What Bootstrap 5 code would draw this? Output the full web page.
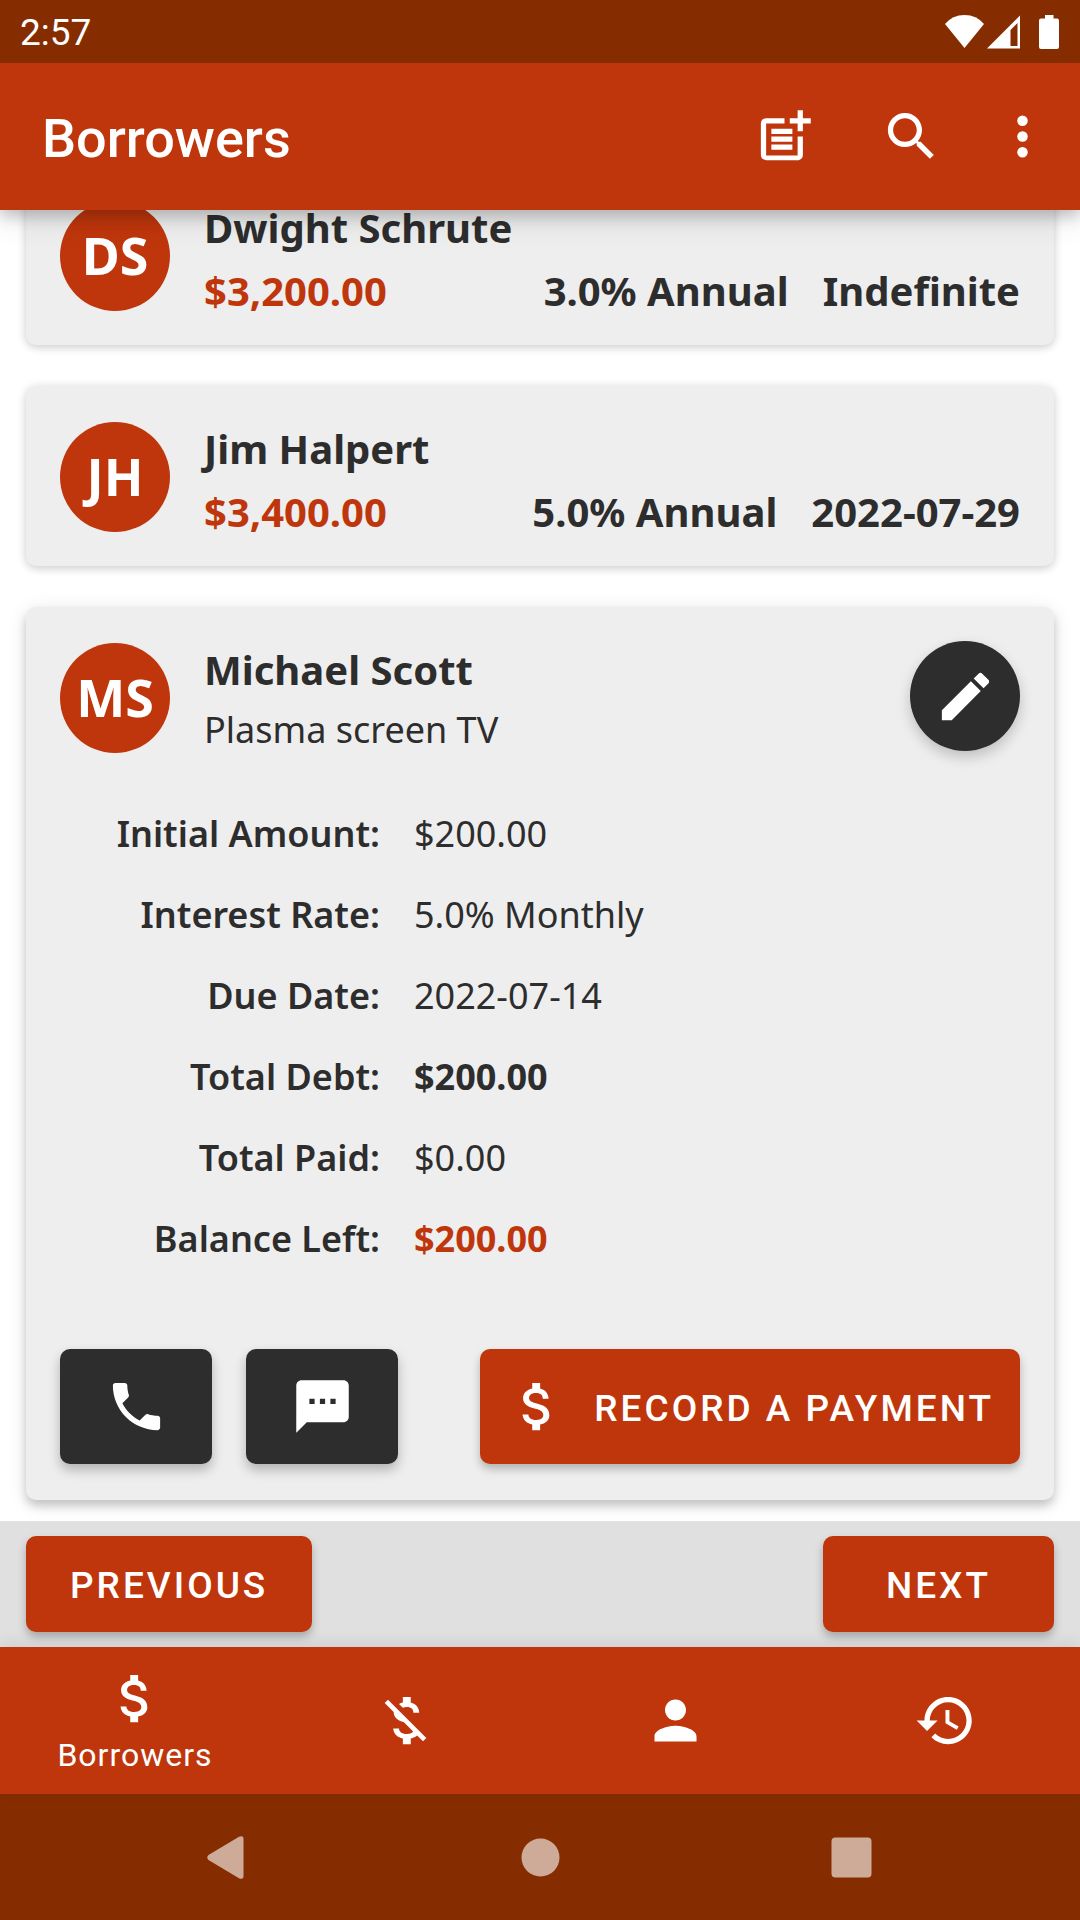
<!DOCTYPE html>
<html lang="en">
<head>
<meta charset="utf-8">
<meta name="viewport" content="width=device-width, initial-scale=1">
<title>Borrowers</title>
<link href="https://cdn.jsdelivr.net/npm/bootstrap@5.3.0/dist/css/bootstrap.min.css" rel="stylesheet">
<style>
  :root { --brand: #bf360c; --brand-dark: #852d00; --ink: #2d2d2d; --surface: #eeeeee; }
  body { font-family: "Noto Sans", sans-serif; font-size: 36px; line-height: 51px; color: var(--ink); background: #fff; }
  .roboto { font-family: Roboto, sans-serif; }
  .brand-bg { background: var(--brand); }
  .brand-text { color: var(--brand); }
  .system-bg { background: var(--brand-dark); }
  .ico { width: 63px; height: 63px; fill: currentColor; display: block; flex: none; }

  .status-bar { height: 63px; padding: 2px 20px 0; font-size: 37px; z-index: 3; }
  .app-bar { height: 147px; padding: 0 26px 0 42px; z-index: 2; box-shadow: 0 6px 14px rgba(0,0,0,.2), 0 10px 30px rgba(0,0,0,.1); }
  .app-title { font-size: 54px; line-height: 62px; font-weight: 500; padding-top: 4px; }
  .app-actions { gap: 64px; }
  .app-actions button:last-child { margin-left: -16px; }
  .plain-btn { background: none; border: 0; padding: 0; color: inherit; }

  .borrower-list { overflow-y: auto; scrollbar-width: none; min-height: 0; padding: 21px 26px; }
  .borrower-list::-webkit-scrollbar { display: none; }
  .list-stack { gap: 41px; }
  .borrower { background: var(--surface); border: 0; border-radius: 10px; color: var(--ink); padding: 34px 34px 26px; box-shadow: 0 3px 8px rgba(0,0,0,.14), 0 0 12px rgba(0,0,0,.08); }
  .borrower-open { padding-bottom: 36px; box-shadow: 0 6px 10px rgba(0,0,0,.18), 0 3px 20px rgba(0,0,0,.1); }
  .head-row { gap: 34px; }
  .text-stack { gap: 6px; }
  .strong-line { font-size: 40px; line-height: 57px; font-weight: 700; margin: 0; }
  .terms { gap: 34px; }
  .avatar { width: 110px; height: 110px; margin-top: 2px; padding-bottom: 4px; font-size: 52px; font-weight: 700; color: #fff; }
  .edit-btn { width: 110px; height: 110px; background: var(--ink); color: #fff; border: 0; box-shadow: 0 6px 14px rgba(0,0,0,.2); }
  .detail-list { margin: 53px 0 0; --bs-gutter-x: 0; row-gap: 30px; }
  .detail-list dt { font-weight: 600; }
  .detail-list dd { margin: 0; padding-left: 34px; }
  .action-row { margin-top: 85px; gap: 34px; }

  .btn-md { font-family: Roboto, sans-serif; font-size: 37px; line-height: 44px; font-weight: 500; letter-spacing: 3px; text-transform: uppercase; color: #fff; border: 0; border-radius: 10px; box-shadow: 0 5px 8px rgba(0,0,0,.25); }
  .btn-md:hover { background: var(--brand); color: #fff; }
  .btn-md span { padding-top: 4px; }
  .btn-tall { height: 115px; padding: 0 26px; gap: 25px; }
  .btn-dark-tile { width: 152px; background: var(--ink); box-shadow: 0 6px 12px rgba(0,0,0,.25); }
  .btn-page { height: 96px; min-width: 231px; padding: 0 44px; }
  .pager { background: #e0e0e0; height: 126px; padding: 0 26px; }

  .bottom-nav { height: 147px; z-index: 2; box-shadow: 0 -4px 14px rgba(0,0,0,.08); }
  .bottom-nav a { color: #fff; text-decoration: none; font-size: 32px; line-height: 38px; letter-spacing: 1px; gap: 6px; }
  .system-nav { height: 126px; color: #ceab99; gap: 249px; }
</style>
</head>
<body>
<div class="d-flex flex-column vh-100">

  <div class="status-bar system-bg roboto text-white d-flex align-items-center justify-content-between flex-shrink-0 position-relative">
    <span>2:57</span>
    <svg width="115" height="36" viewBox="0 0 115 36" fill="#fff" aria-hidden="true">
      <path d="M0 9Q7.500 0 19.500 0T39 9L19.500 33Z"/>
      <path fill-rule="evenodd" d="M42 33.500L75 .500V33.500ZM65.500 15V31H72.500V8Z"/>
      <path d="M100 0h8.500V3.500h3.500q2 0 2 2v26.500q0 2-2 2H96q-2 0-2-2V5.500q0-2 2-2h4Z"/>
    </svg>
  </div>

  <header class="app-bar brand-bg roboto text-white d-flex align-items-center justify-content-between flex-shrink-0 position-relative">
    <h1 class="app-title m-0">Borrowers</h1>
    <div class="app-actions d-flex">
      <button type="button" class="plain-btn" aria-label="Add loan"><svg class="ico" viewBox="0 0 24 24"><path d="M17 19.220H5V7h7V5H5c-1.100 0-2 .900-2 2v12c0 1.100.900 2 2 2h12c1.100 0 2-.900 2-2v-7h-2v7.220z"/><path d="M19 2h-2v3h-3v2h3v3h2V7h3V5h-3V2zM7 9h8v2H7zM7 12h8v2H7zM7 15h8v2H7z"/></svg></button>
      <button type="button" class="plain-btn" aria-label="Search"><svg class="ico" viewBox="0 0 24 24"><path d="M15.500 14h-.79l-.28-.27C15.410 12.590 16 11.110 16 9.500 16 5.910 13.090 3 9.500 3S3 5.910 3 9.500 5.910 16 9.500 16c1.610 0 3.090-.59 4.230-1.570l.27.28v.79l5 4.990L20.490 19l-4.990-5zm-6 0C7.010 14 5 11.990 5 9.500S7.010 5 9.500 5 14 7.010 14 9.500 11.990 14 9.500 14z"/></svg></button>
      <button type="button" class="plain-btn" aria-label="More options"><svg class="ico" viewBox="0 0 24 24"><circle cx="12" cy="6" r="2"/><circle cx="12" cy="12" r="2"/><circle cx="12" cy="18" r="2"/></svg></button>
    </div>
  </header>

  <main class="borrower-list flex-fill" id="borrowers">
    <div class="list-stack d-flex flex-column">

      <article class="card borrower">
        <div class="head-row d-flex align-items-start">
          <div class="avatar brand-bg rounded-circle d-flex align-items-center justify-content-center flex-shrink-0">DS</div>
          <div class="text-stack d-flex flex-column flex-fill">
            <h2 class="strong-line">Dwight Schrute</h2>
            <div class="strong-line terms d-flex"><span class="brand-text me-auto">$3,200.00</span><span>3.0% Annual</span><span>Indefinite</span></div>
          </div>
        </div>
      </article>

      <article class="card borrower">
        <div class="head-row d-flex align-items-start">
          <div class="avatar brand-bg rounded-circle d-flex align-items-center justify-content-center flex-shrink-0">JH</div>
          <div class="text-stack d-flex flex-column flex-fill">
            <h2 class="strong-line">Jim Halpert</h2>
            <div class="strong-line terms d-flex"><span class="brand-text me-auto">$3,400.00</span><span>5.0% Annual</span><span>2022-07-29</span></div>
          </div>
        </div>
      </article>

      <article class="card borrower borrower-open">
        <div class="head-row d-flex align-items-start">
          <div class="avatar brand-bg rounded-circle d-flex align-items-center justify-content-center flex-shrink-0">MS</div>
          <div class="text-stack d-flex flex-column flex-fill">
            <h2 class="strong-line">Michael Scott</h2>
            <div>Plasma screen TV</div>
          </div>
          <button type="button" class="edit-btn rounded-circle d-flex align-items-center justify-content-center p-0" aria-label="Edit"><svg class="ico" viewBox="0 0 24 24"><path d="M3 17.250V21h3.750L17.810 9.940l-3.750-3.750L3 17.250zM20.710 7.040c.39-.39.39-1.020 0-1.410l-2.340-2.340c-.39-.39-1.020-.39-1.410 0l-1.830 1.830 3.750 3.750 1.830-1.830z"/></svg></button>
        </div>

        <dl class="detail-list row">
          <dt class="col-4 text-end">Initial Amount:</dt><dd class="col-8">$200.00</dd>
          <dt class="col-4 text-end">Interest Rate:</dt><dd class="col-8">5.0% Monthly</dd>
          <dt class="col-4 text-end">Due Date:</dt><dd class="col-8">2022-07-14</dd>
          <dt class="col-4 text-end">Total Debt:</dt><dd class="col-8 fw-bold">$200.00</dd>
          <dt class="col-4 text-end">Total Paid:</dt><dd class="col-8">$0.00</dd>
          <dt class="col-4 text-end">Balance Left:</dt><dd class="col-8 fw-bold brand-text">$200.00</dd>
        </dl>

        <div class="action-row d-flex">
          <button type="button" class="btn btn-md btn-tall btn-dark-tile d-flex align-items-center justify-content-center" aria-label="Call"><svg class="ico" viewBox="0 0 24 24"><path d="M6.620 10.790c1.440 2.830 3.760 5.140 6.590 6.590l2.200-2.200c.27-.27.67-.36 1.020-.24 1.120.37 2.330.57 3.570.57.55 0 1 .45 1 1V20c0 .55-.45 1-1 1-9.390 0-17-7.610-17-17 0-.55.45-1 1-1h3.500c.55 0 1 .45 1 1 0 1.250.2 2.450.57 3.570.11.35.03.74-.25 1.020l-2.200 2.200z"/></svg></button>
          <button type="button" class="btn btn-md btn-tall btn-dark-tile d-flex align-items-center justify-content-center" aria-label="Message"><svg class="ico" viewBox="0 0 24 24"><path d="M20 2H4c-1.100 0-1.990.9-1.990 2L2 22l4-4h14c1.100 0 2-.9 2-2V4c0-1.100-.9-2-2-2zM9 11H7V9h2v2zm4 0h-2V9h2v2zm4 0h-2V9h2v2z"/></svg></button>
          <button type="button" class="btn btn-md btn-tall brand-bg ms-auto d-flex align-items-center text-nowrap"><svg class="ico" viewBox="0 0 24 24"><path d="M11.800 10.900c-2.270-.59-3-1.200-3-2.150 0-1.090 1.010-1.850 2.700-1.850 1.780 0 2.440.85 2.500 2.100h2.210c-.07-1.720-1.120-3.300-3.210-3.810V3h-3v2.160c-1.940.42-3.500 1.680-3.500 3.610 0 2.310 1.910 3.460 4.700 4.130 2.500.6 3 1.480 3 2.410 0 .69-.49 1.790-2.700 1.790-2.060 0-2.870-.92-2.980-2.100h-2.200c.12 2.190 1.760 3.420 3.680 3.830V21h3v-2.150c1.950-.37 3.500-1.500 3.500-3.550 0-2.840-2.430-3.810-4.700-4.400z"/></svg><span>Record a payment</span></button>
        </div>
      </article>

    </div>
  </main>

  <div class="pager d-flex align-items-center justify-content-between flex-shrink-0">
    <button type="button" class="btn btn-md btn-page brand-bg d-flex align-items-center justify-content-center"><span>Previous</span></button>
    <button type="button" class="btn btn-md btn-page brand-bg d-flex align-items-center justify-content-center"><span>Next</span></button>
  </div>

  <nav class="bottom-nav brand-bg roboto d-flex flex-shrink-0 position-relative" aria-label="Sections">
    <a href="#" class="col d-flex flex-column align-items-center justify-content-center" aria-current="page"><svg class="ico" viewBox="0 0 24 24"><path d="M11.800 10.900c-2.270-.59-3-1.200-3-2.150 0-1.090 1.010-1.850 2.700-1.850 1.780 0 2.440.85 2.500 2.100h2.210c-.07-1.720-1.120-3.300-3.210-3.810V3h-3v2.160c-1.940.42-3.500 1.680-3.500 3.610 0 2.310 1.910 3.460 4.700 4.130 2.500.6 3 1.480 3 2.410 0 .69-.49 1.790-2.700 1.790-2.060 0-2.870-.92-2.980-2.100h-2.200c.12 2.190 1.760 3.420 3.680 3.830V21h3v-2.150c1.950-.37 3.500-1.500 3.500-3.550 0-2.840-2.430-3.810-4.700-4.400z"/></svg><span>Borrowers</span></a>
    <a href="#" class="col d-flex flex-column align-items-center justify-content-center" aria-label="Paid loans"><svg class="ico" viewBox="0 0 24 24"><path d="M12.500 6.900c1.780 0 2.440.85 2.500 2.100h2.210c-.07-1.720-1.120-3.300-3.210-3.810V3h-3v2.160c-.53.12-1.030.3-1.480.54l1.470 1.470c.41-.17.91-.27 1.510-.27zM5.330 4.060L4.060 5.330 7.500 8.770c0 2.080 1.560 3.210 3.910 3.910l3.510 3.510c-.34.48-1.050.91-2.420.91-2.060 0-2.870-.92-2.980-2.100h-2.200c.12 2.190 1.760 3.420 3.680 3.830V21h3v-2.150c.96-.18 1.820-.55 2.450-1.120l2.220 2.220 1.270-1.270L5.330 4.060z"/></svg></a>
    <a href="#" class="col d-flex flex-column align-items-center justify-content-center" aria-label="People"><svg class="ico" viewBox="0 0 24 24"><path d="M12 12c2.210 0 4-1.790 4-4s-1.790-4-4-4-4 1.790-4 4 1.790 4 4 4zm0 2c-2.670 0-8 1.340-8 4v2h16v-2c0-2.660-5.330-4-8-4z"/></svg></a>
    <a href="#" class="col d-flex flex-column align-items-center justify-content-center" aria-label="History"><svg class="ico" viewBox="0 0 24 24"><path d="M13 3c-4.970 0-9 4.030-9 9H1l3.890 3.890.07.14L9 12H6c0-3.870 3.130-7 7-7s7 3.130 7 7-3.130 7-7 7c-1.930 0-3.680-.79-4.940-2.060l-1.420 1.420C8.270 19.990 10.510 21 13 21c4.970 0 9-4.030 9-9s-4.030-9-9-9zm-1 5v5l4.280 2.540.72-1.210-3.500-2.080V8H12z"/></svg></a>
  </nav>

  <div class="system-nav system-bg d-flex align-items-center justify-content-center flex-shrink-0">
    <button type="button" class="plain-btn" aria-label="Back"><svg class="ico" viewBox="0 0 63 63"><path d="M11.500 29Q9 31.500 11.500 34L42 52.200Q46.500 54 46.500 50V13Q46.500 9 42 10.800Z"/></svg></button>
    <button type="button" class="plain-btn" aria-label="Home"><svg class="ico" viewBox="0 0 63 63"><circle cx="31.500" cy="31.500" r="19"/></svg></button>
    <button type="button" class="plain-btn" aria-label="Recent apps"><svg class="ico" viewBox="0 0 63 63"><rect x="10.500" y="11.500" width="40" height="40" rx="4"/></svg></button>
  </div>
</div>

<script src="https://cdn.jsdelivr.net/npm/bootstrap@5.3.0/dist/js/bootstrap.bundle.min.js"></script>
<script>
  // Keep the expanded borrower in view
  const list = document.getElementById('borrowers');
  list.scrollTop = list.scrollHeight;
</script>
</body>
</html>
